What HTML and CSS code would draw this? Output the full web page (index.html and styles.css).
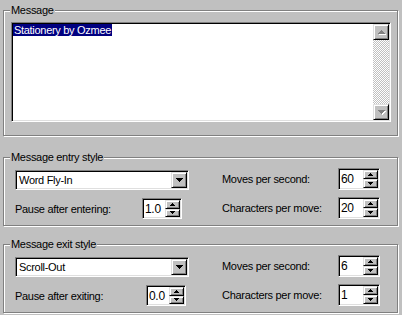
FILE: index.html
```html
<!DOCTYPE html>
<html lang="en">
<head>
  <meta charset="UTF-8">
  <title>Message settings</title>
  <link rel="stylesheet" href="styles.css">
</head>
<body>
  <div class="dialog">

    <div class="group group-message">
      <span class="legend">Message</span>
      <div class="field memo">
        <div class="memo-text"><span class="selected">Stationery by Ozmee</span></div>
        <div class="vscroll">
          <div class="btn sbtn">
            <svg width="7" height="4" viewBox="0 0 7 4"><path d="M3 0h1v1h1v1h1v1h1v1H0V3h1V2h1V1h1z" fill="#808080"/></svg>
          </div>
          <div class="track"></div>
          <div class="btn sbtn">
            <svg width="7" height="4" viewBox="0 0 7 4"><path d="M0 0h7v1H6v1H5v1H4v1H3V3H2V2H1V1H0z" fill="#808080"/></svg>
          </div>
        </div>
      </div>
    </div>

    <div class="group group-style">
      <span class="legend">Message entry style</span>
      <div class="col-left">
        <div class="field combo">
          <span class="combo-text">Word Fly-In</span>
          <div class="btn combo-btn">
            <svg width="7" height="4" viewBox="0 0 7 4"><path d="M0 0h7v1H6v1H5v1H4v1H3V3H2V2H1V1H0z" fill="#000"/></svg>
          </div>
        </div>
        <div class="row row-pause">
          <span class="lbl lbl-enter">Pause after entering:</span>
          <div class="field spin spin-small">
            <span class="spin-text">1.0</span>
            <div class="spin-btns">
              <div class="btn ubtn"><svg width="5" height="3" viewBox="0 0 5 3"><path d="M2 0h1v1h1v1h1v1H0V2h1V1h1z"/></svg></div>
              <div class="btn ubtn"><svg width="5" height="3" viewBox="0 0 5 3"><path d="M0 0h5v1H4v1H3v1H2V2H1V1H0z"/></svg></div>
            </div>
          </div>
        </div>
      </div>
      <div class="col-right">
        <div class="row">
          <span class="lbl lbl-right">Moves per second:</span>
          <div class="field spin">
            <span class="spin-text">60</span>
            <div class="spin-btns">
              <div class="btn ubtn"><svg width="5" height="3" viewBox="0 0 5 3"><path d="M2 0h1v1h1v1h1v1H0V2h1V1h1z"/></svg></div>
              <div class="btn ubtn"><svg width="5" height="3" viewBox="0 0 5 3"><path d="M0 0h5v1H4v1H3v1H2V2H1V1H0z"/></svg></div>
            </div>
          </div>
        </div>
        <div class="row">
          <span class="lbl lbl-right">Characters per move:</span>
          <div class="field spin">
            <span class="spin-text">20</span>
            <div class="spin-btns">
              <div class="btn ubtn"><svg width="5" height="3" viewBox="0 0 5 3"><path d="M2 0h1v1h1v1h1v1H0V2h1V1h1z"/></svg></div>
              <div class="btn ubtn"><svg width="5" height="3" viewBox="0 0 5 3"><path d="M0 0h5v1H4v1H3v1H2V2H1V1H0z"/></svg></div>
            </div>
          </div>
        </div>
      </div>
    </div>

    <div class="group group-style group-exit">
      <span class="legend">Message exit style</span>
      <div class="col-left">
        <div class="field combo">
          <span class="combo-text">Scroll-Out</span>
          <div class="btn combo-btn">
            <svg width="7" height="4" viewBox="0 0 7 4"><path d="M0 0h7v1H6v1H5v1H4v1H3V3H2V2H1V1H0z" fill="#000"/></svg>
          </div>
        </div>
        <div class="row row-pause">
          <span class="lbl lbl-exit">Pause after exiting:</span>
          <div class="field spin spin-small">
            <span class="spin-text">0.0</span>
            <div class="spin-btns">
              <div class="btn ubtn"><svg width="5" height="3" viewBox="0 0 5 3"><path d="M2 0h1v1h1v1h1v1H0V2h1V1h1z"/></svg></div>
              <div class="btn ubtn"><svg width="5" height="3" viewBox="0 0 5 3"><path d="M0 0h5v1H4v1H3v1H2V2H1V1H0z"/></svg></div>
            </div>
          </div>
        </div>
      </div>
      <div class="col-right">
        <div class="row">
          <span class="lbl lbl-right">Moves per second:</span>
          <div class="field spin">
            <span class="spin-text">6</span>
            <div class="spin-btns">
              <div class="btn ubtn"><svg width="5" height="3" viewBox="0 0 5 3"><path d="M2 0h1v1h1v1h1v1H0V2h1V1h1z"/></svg></div>
              <div class="btn ubtn"><svg width="5" height="3" viewBox="0 0 5 3"><path d="M0 0h5v1H4v1H3v1H2V2H1V1H0z"/></svg></div>
            </div>
          </div>
        </div>
        <div class="row">
          <span class="lbl lbl-right">Characters per move:</span>
          <div class="field spin">
            <span class="spin-text">1</span>
            <div class="spin-btns">
              <div class="btn ubtn"><svg width="5" height="3" viewBox="0 0 5 3"><path d="M2 0h1v1h1v1h1v1H0V2h1V1h1z"/></svg></div>
              <div class="btn ubtn"><svg width="5" height="3" viewBox="0 0 5 3"><path d="M0 0h5v1H4v1H3v1H2V2H1V1H0z"/></svg></div>
            </div>
          </div>
        </div>
      </div>
    </div>

  </div>
</body>
</html>
```

FILE: styles.css
```css
body {
  margin: 0;
  background: #c0c0c0;
  font-family: "Liberation Sans", Arial, sans-serif;
  font-size: 11px;
  letter-spacing: -0.3px;
  color: #000;
  overflow: hidden;
}
.dialog {
  width: 402px;
  height: 315px;
  padding: 10px 0 0 3px;
  box-sizing: border-box;
}

/* etched group frame */
.group {
  position: relative;
  width: 395px;
  box-sizing: border-box;
  border: 1px solid #808080;
  box-shadow: inset 1px 1px 0 #fff, 1px 1px 0 #fff;
}
.legend {
  position: absolute;
  top: -7px;
  left: 6px;
  padding: 0 1px;
  line-height: 13px;
  background: #c0c0c0;
}
.group-message {
  height: 126px;
  padding: 11px 6px 0 7px;
}
.group-style {
  display: flex;
  height: 69px;
  margin-top: 21px;
  padding: 0 0 0 11px;
}
.group-exit {
  margin-top: 18px;
}

/* sunken field */
.field {
  box-sizing: border-box;
  background: #fff;
  border: 1px solid;
  border-color: #808080 #fff #fff #808080;
  box-shadow: inset 1px 1px 0 #000, inset -1px -1px 0 #dfdfdf;
  padding: 1px;
  display: flex;
}

/* raised button */
.btn {
  box-sizing: border-box;
  background: #c0c0c0;
  border: 1px solid;
  border-color: #dfdfdf #000 #000 #dfdfdf;
  box-shadow: inset 1px 1px 0 #fff, inset -1px -1px 0 #808080;
  display: flex;
  align-items: center;
  justify-content: center;
}

.memo {
  width: 380px;
  height: 100px;
}
.memo-text {
  flex: 1;
  line-height: 13px;
}
.selected {
  background: #000080;
  color: #fff;
  padding: 0 1px;
}
.vscroll {
  width: 16px;
  display: flex;
  flex-direction: column;
}
.sbtn {
  height: 16px;
}
.sbtn svg {
  filter: drop-shadow(1px 1px 0 #fff);
}
.track {
  flex: 1;
  background-image: conic-gradient(#fff 25%, #c0c0c0 0 50%, #fff 0 75%, #c0c0c0 0);
  background-size: 2px 2px;
}

.col-left {
  width: 174px;
  padding-top: 12px;
}
.col-right {
  margin-left: 33px;
  padding-top: 10px;
}
.combo {
  height: 20px;
  align-items: stretch;
}
.combo-text {
  flex: 1;
  padding-left: 2px;
  line-height: 16px;
}
.combo-btn {
  width: 16px;
}
.row {
  display: flex;
  align-items: center;
  margin-bottom: 7px;
}
.row-pause {
  margin-top: 8px;
}
.lbl-enter {
  width: 127px;
}
.lbl-exit {
  width: 131px;
}
.lbl-right {
  width: 116px;
}

.spin {
  width: 42px;
  height: 22px;
}
.spin-small {
  width: 40px;
  height: 21px;
}
.spin-text {
  flex: 1;
  padding-left: 1px;
  font-size: 12px;
  line-height: 18px;
}
.spin-btns {
  width: 15px;
  display: flex;
  flex-direction: column;
}
.ubtn {
  flex: 1;
}
```
